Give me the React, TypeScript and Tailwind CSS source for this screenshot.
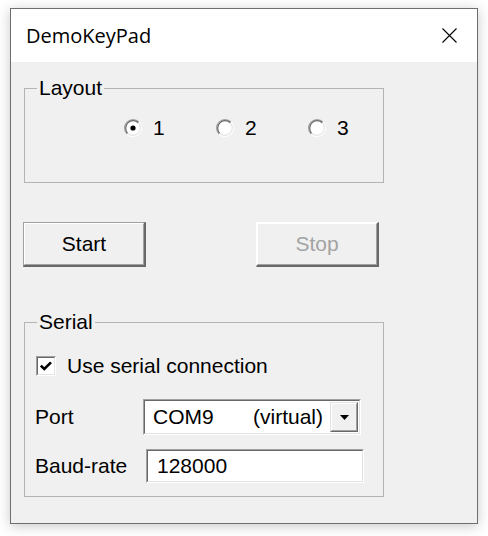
import React from 'react';

const UI_FONT = { fontFamily: '"Liberation Sans", Arial, sans-serif' };

// lingkaran radio gaya klasik (cekung)
const Radio = ({ checked }: { checked?: boolean }) => (
  <svg width="20" height="20" viewBox="0 0 20 20">
    <circle cx="10" cy="10" r="8" fill="#ffffff" />
    <path d="M3.99 16.01 A8.5 8.5 0 0 1 16.01 3.99" fill="none" stroke="#a0a0a0" strokeWidth="1.2" />
    <path d="M16.01 3.99 A8.5 8.5 0 0 1 3.99 16.01" fill="none" stroke="#ffffff" strokeWidth="1.2" />
    <path d="M4.7 15.3 A7.5 7.5 0 0 1 15.3 4.7" fill="none" stroke="#696969" strokeWidth="1.2" />
    <path d="M15.3 4.7 A7.5 7.5 0 0 1 4.7 15.3" fill="none" stroke="#e3e3e3" strokeWidth="1.2" />
    {checked && <circle cx="10" cy="10" r="2.6" fill="#000000" />}
  </svg>
);

const RadioItem = ({ label, checked }: { label: string; checked?: boolean }) => (
  <div className="flex w-[92px] items-center gap-[10px] last:w-auto">
    <Radio checked={checked} />
    <span className="leading-[22px]">{label}</span>
  </div>
);

const Sunken = ({ className, children }: { className?: string; children?: React.ReactNode }) => (
  <div className={`border border-t-[#a0a0a0] border-l-[#a0a0a0] border-b-white border-r-white ${className ?? ''}`}>
    <div className="flex h-full w-full border border-t-[#696969] border-l-[#696969] border-b-[#e3e3e3] border-r-[#e3e3e3] bg-white">
      {children}
    </div>
  </div>
);

const Button = ({ label, disabled, isDefault }: { label: string; disabled?: boolean; isDefault?: boolean }) => (
  <div
    className={`h-[45px] w-[123px] border-t border-l border-r-2 border-b-2 border-r-[#696969] border-b-[#696969] ${
      isDefault ? 'border-t-[#a0a0a0] border-l-[#a0a0a0]' : 'border-t-white border-l-white'
    }`}
  >
    <div className="flex h-full w-full items-center justify-center border border-t-white border-l-white border-b-[#a0a0a0] border-r-[#a0a0a0] bg-[#f0f0f0]">
      <span className={disabled ? 'text-[#a3a3a3]' : 'text-black'}>{label}</span>
    </div>
  </div>
);

const GroupBox = ({ title, className, children }: { title: string; className?: string; children?: React.ReactNode }) => (
  <fieldset className={`m-0 w-[360px] min-w-0 border border-[#b4b4b4] p-0 ${className ?? ''}`}>
    <legend className="ml-[12px] px-[2px] leading-[22px]">{title}</legend>
    {children}
  </fieldset>
);

export default function App() {
  return (
    <div className="h-[536px] w-[488px] bg-white pl-[10px] pt-[8px] text-[21px] text-black" style={UI_FONT}>
      <div className="flex h-[516px] w-[468px] flex-col border border-[#6e6e6e] bg-[#f0f0f0] shadow-[0_2px_12px_rgba(0,0,0,0.22)]">
        {/* Title bar */}
        <div className="flex h-[53px] items-center justify-between bg-white pl-[15px] pr-[20px]">
          <span className="text-[20px] leading-none" style={{ fontFamily: '"Open Sans", "Noto Sans", sans-serif' }}>
            DemoKeyPad
          </span>
          <svg width="15" height="15" viewBox="0 0 15 15">
            <path d="M0.5 0.5 L14.5 14.5 M14.5 0.5 L0.5 14.5" stroke="#000000" strokeWidth="1.1" />
          </svg>
        </div>

        <div className="pl-[12px] pt-[15px]">
          {/* Layout */}
          <GroupBox title="Layout" className="ml-px h-[106px]">
            <div className="ml-[98px] mt-[18px] flex">
              <RadioItem label="1" checked />
              <RadioItem label="2" />
              <RadioItem label="3" />
            </div>
          </GroupBox>

          {/* Start / Stop */}
          <div className="mt-[39px] flex gap-[110px]">
            <Button label="Start" isDefault />
            <Button label="Stop" disabled />
          </div>

          {/* Serial */}
          <GroupBox title="Serial" className="ml-px mt-[44px] h-[186px]">
            <div className="ml-[11px] mt-[22px] flex items-center gap-[11px]">
              <Sunken className="h-[20px] w-[20px]">
                <svg width="16" height="16" viewBox="0 0 16 16">
                  <path d="M2.8 7.6 L6.3 11 L13 4.3" fill="none" stroke="#000000" strokeWidth="2.6" />
                </svg>
              </Sunken>
              <span className="leading-[22px]">Use serial connection</span>
            </div>

            <div className="ml-[10px] mt-[22px] flex items-center">
              <span className="w-[108px] leading-[22px]">Port</span>
              <Sunken className="h-[36px] w-[218px]">
                <div className="flex flex-1 items-center justify-between pl-[8px] pr-[7px]">
                  <span>COM9</span>
                  <span>(virtual)</span>
                </div>
                <div className="my-px mr-px border border-t-[#e3e3e3] border-l-[#e3e3e3] border-b-[#696969] border-r-[#696969]">
                  <div className="flex h-full w-[26px] items-center justify-center border border-t-white border-l-white border-b-[#a0a0a0] border-r-[#a0a0a0] bg-[#f0f0f0]">
                    <svg width="9" height="5" viewBox="0 0 9 5">
                      <path d="M0 0 H9 L4.5 5 Z" fill="#000000" />
                    </svg>
                  </div>
                </div>
              </Sunken>
            </div>

            <div className="ml-[10px] mt-[14px] flex items-center">
              <span className="w-[111px] leading-[22px]">Baud-rate</span>
              <Sunken className="h-[34px] w-[218px]">
                <div className="flex flex-1 items-center pl-[9px]">
                  <span>128000</span>
                </div>
              </Sunken>
            </div>
          </GroupBox>
        </div>
      </div>
    </div>
  );
}
